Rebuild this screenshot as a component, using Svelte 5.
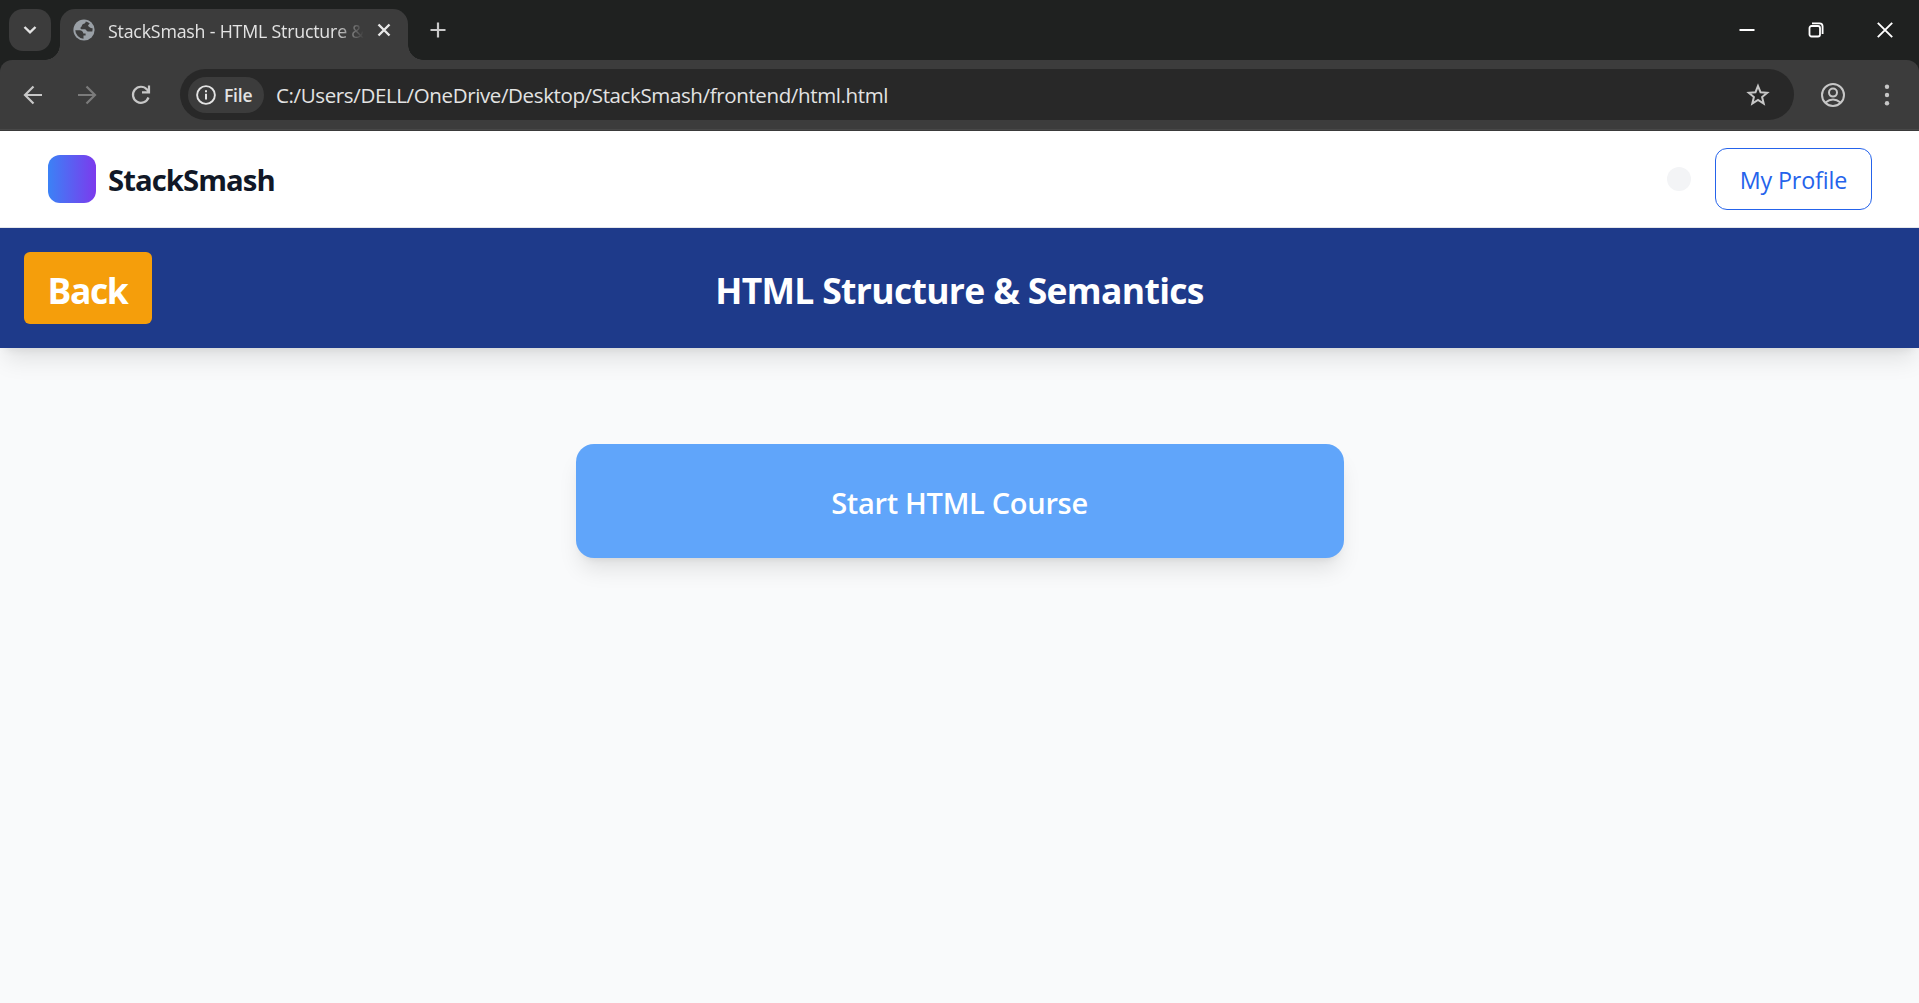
<script>
  const windowTitle = 'StackSmash - HTML Structure &';
  const address = 'C:/Users/DELL/OneDrive/Desktop/StackSmash/frontend/html.html';
</script>

<div class="window">
  <div class="tabstrip">
    <button class="tab-search" aria-label="Search tabs">
      <svg width="14" height="10" viewBox="0 0 14 10"><path d="M1.5 2 7 7.4 12.500 2" fill="none" stroke="#e3e3e3" stroke-width="2.4" /></svg>
    </button>
    <div class="tab">
      <svg class="globe" width="22" height="22" viewBox="0 0 22 22">
        <circle cx="11" cy="11" r="10.600" fill="#9aa0a6" />
        <path d="M12.800 2.500C12.500 4.600 11 4.600 9.800 5.200C8.800 5.700 9.200 7.300 8 8C7.200 8.600 7.300 10.300 8.600 10.300H11.800C13.200 10.300 13.300 12.500 14.800 12.500H19.300A8.800 8.800 0 0 0 19.600 9.300C18.500 9.600 17.600 8.900 16.600 8.300C15.200 7.500 14.500 6.700 15.800 5.600L16.800 4.400A8.800 8.800 0 0 0 12.800 2.500Z M2.300 11.200H6.500C8.800 11.200 10.300 12.600 10.300 14.600H12.600V16.400H10.500V19.700A8.800 8.800 0 0 1 2.300 11.200Z" fill="#3c3c3c" />
      </svg>
      <span class="tab-title">{windowTitle}</span>
      <svg class="tab-close" width="14" height="14" viewBox="0 0 14 14"><path d="M1.500 1.500 12.500 12.500M12.500 1.500 1.500 12.500" stroke="#e8e8e8" stroke-width="2.400" /></svg>
    </div>
    <svg class="new-tab" width="16" height="16" viewBox="0 0 16 16"><path d="M8 .5V15.500M.5 8H15.500" stroke="#c9c9c9" stroke-width="2.200" /></svg>
    <div class="controls">
      <svg width="16" height="16" viewBox="0 0 16 16"><path d="M.5 8H15.500" stroke="#fff" stroke-width="2" /></svg>
      <svg width="16" height="16" viewBox="0 0 16 16" fill="none" stroke="#fff" stroke-width="1.800"><rect x="1.500" y="4" width="10.500" height="10.500" rx="2" /><path d="M4 1.300H11.500Q14.600 1.300 14.600 4.500V12" /></svg>
      <svg width="16" height="16" viewBox="0 0 16 16"><path d="M.8 .8 15.200 15.200M15.200 .8 .8 15.200" stroke="#fff" stroke-width="1.900" /></svg>
    </div>
  </div>

  <div class="toolbar-frame">
    <div class="toolbar">
      <svg class="nav" width="20" height="20" viewBox="0 0 20 20"><path d="M19 10H2.500M10.500 1.500 2 10 10.500 18.500" fill="none" stroke="#c7c7c7" stroke-width="2.200" /></svg>
      <svg class="nav forward-arrow" width="20" height="20" viewBox="0 0 20 20"><path d="M1 10H17.500M9.500 1.500 18 10 9.500 18.500" fill="none" stroke="#7b7b7b" stroke-width="2.200" /></svg>
      <svg class="nav reload" width="20" height="20" viewBox="0 0 20 20"><path d="M17.500 12.500A8 8 0 1 1 16 4.500L18 6.700M18 .5V7.400H11" fill="none" stroke="#c7c7c7" stroke-width="2.200" /></svg>
      <div class="omnibox">
        <div class="chip">
          <svg width="20" height="20" viewBox="0 0 20 20"><circle cx="10" cy="10" r="8.900" fill="none" stroke="#e3e3e3" stroke-width="1.900" /><path d="M10 8.800V14.600M10 5.300V7.300" stroke="#e3e3e3" stroke-width="2" /></svg>
          <span class="chip-label">File</span>
        </div>
        <span class="address">{address}</span>
        <svg class="star" width="24" height="24" viewBox="0 0 24 24"><path d="M12 3 14.500 9.200 21.200 9.700 16.100 14 17.700 20.500 12 17 6.300 20.500 7.900 14 2.800 9.700 9.500 9.200Z" fill="none" stroke="#c7c7c7" stroke-width="2" /></svg>
      </div>
      <svg class="account" width="24" height="24" viewBox="0 0 24 24" fill="none" stroke="#c7c7c7" stroke-width="2"><circle cx="12" cy="12" r="11" /><circle cx="12" cy="9.600" r="4" /><path d="M4.500 19.500Q12 13.500 19.500 19.500" /></svg>
      <svg class="menu" width="6" height="24" viewBox="0 0 6 24" fill="#c7c7c7"><circle cx="3" cy="3.800" r="2.200" /><circle cx="3" cy="12" r="2.200" /><circle cx="3" cy="20.200" r="2.200" /></svg>
    </div>
  </div>

  <header class="site-header">
    <div class="brand"><span class="logo"></span><span class="brand-name">StackSmash</span></div>
    <div class="actions"><span class="dot"></span><button class="profile">My Profile</button></div>
  </header>

  <section class="banner">
    <button class="back">Back</button>
    <h1>HTML Structure &amp; Semantics</h1>
  </section>

  <main>
    <button class="start">Start HTML Course</button>
  </main>
</div>

<style>
  :global(body) { margin: 0; overflow: hidden; }
  .window { height: 1003px; width: 1919px; display: flex; flex-direction: column; background: #f9fafb; font-family: 'Open Sans', 'Noto Sans', sans-serif; overflow: hidden; }
  .window * { box-sizing: border-box; }
  button { border: 0; padding: 0; font-family: inherit; }
  svg { display: block; flex: none; }
  span { white-space: nowrap; }
  .tabstrip { height: 60px; flex: none; background: #1f2120; display: flex; padding: 9px 26px 0 9px; }
  .tab-search { width: 42px; height: 42px; border-radius: 14px; background: #3c3c3c; display: flex; align-items: center; justify-content: center; }
  .tab { width: 348px; height: 51px; margin-left: 9px; border-radius: 15px 15px 0 0; background: #3c3c3c; display: flex; padding: 10px 17px 0 13px; position: relative; }
  .tab::before, .tab::after { content: ''; position: absolute; bottom: 0; width: 15px; height: 15px; }
  .tab::before { left: -15px; background: radial-gradient(circle at 0 0, transparent 14.500px, #3c3c3c 15px); }
  .tab::after { right: -15px; background: radial-gradient(circle at 100% 0, transparent 14.500px, #3c3c3c 15px); }
  .tab-title { width: 256px; margin: 0 0 0 13px; font-size: 17.800px; letter-spacing: -.2px; line-height: 24px; color: #e3e3e3; mask-image: linear-gradient(90deg, #000 226px, transparent 256px); }
  .tab-close { margin: 4px 0 0 13px; }
  .new-tab { margin: 13px 0 0 22px; }
  .controls { margin: 12.500px 0 0 auto; display: flex; gap: 53px; }
  .toolbar-frame { height: 71px; flex: none; background: #1f2120; }
  .toolbar { height: 71px; display: flex; align-items: center; padding: 0 29px 1px 23px; border-radius: 12px 12px 0 0; background: #3c3c3c; border-bottom: 1px solid #3a3a3a; box-shadow: inset 0 -1px #484848; }
  .forward-arrow { margin-left: 34px; }
  .reload { margin-left: 34px; }
  .omnibox { width: 1614px; height: 51px; margin-left: 29px; padding: 0 24px 0 8px; border-radius: 26px; background: #282828; display: flex; align-items: center; }
  .chip { width: 76px; height: 36px; padding-left: 8px; border-radius: 18px; background: #3c3c3c; display: flex; align-items: center; }
  .chip-label { margin-left: 8px; font-size: 17.500px; letter-spacing: -.2px; font-weight: 600; line-height: 24px; color: #e3e3e3; }
  .address { margin-left: 12px; font-size: 20.500px; letter-spacing: -.37px; line-height: 28px; color: #e3e3e3; }
  .star { margin-left: auto; }
  .account { margin-left: 27px; }
  .menu { margin-left: auto; }
  .site-header { height: 97px; flex: none; display: flex; align-items: center; justify-content: space-between; padding: 0 47px 0 48px; background: #fff; border-bottom: 1px solid #e5e7eb; }
  .brand, .actions { display: flex; align-items: center; }
  .logo { width: 48px; height: 48px; border-radius: 12px; background: linear-gradient(90deg, #3b82f6, #7c3aed); }
  .brand-name { margin-left: 12px; padding-top: 1px; font-size: 29.300px; letter-spacing: -.95px; font-weight: 700; color: #111827; }
  .dot { width: 24px; height: 24px; border-radius: 50%; background: #f3f4f6; }
  .profile { width: 157px; height: 62px; margin-left: 24px; padding-top: 2px; border: 1px solid #2563eb; border-radius: 12px; background: #fff; color: #2563eb; font-size: 23.300px; letter-spacing: -.14px; }
  .banner { height: 120px; flex: none; display: grid; grid-template-columns: 128px 1fr 128px; align-items: center; padding: 0 24px; background: #1e3a8a; box-shadow: 0 15px 22.500px -4.500px rgb(0 0 0 / .1), 0 6px 9px -6px rgb(0 0 0 / .1); }
  .back { height: 72px; padding: 3px 1px 0 0; border-radius: 6px; background: #f59e0b; color: #fff; font-size: 35.500px; letter-spacing: -1.400px; font-weight: 700; }
  h1 { margin: 0; padding-top: 3px; text-align: center; color: #fff; font-size: 35.500px; letter-spacing: -.68px; font-weight: 700; }
  main { flex: 1; display: flex; justify-content: center; align-items: flex-start; padding-top: 96px; }
  .start { width: 768px; height: 114px; padding-top: 2px; border-radius: 18px; background: #60a5fa; color: #fff; font-size: 29px; letter-spacing: -.3px; font-weight: 600; box-shadow: 0 15px 22.500px -4.500px rgb(0 0 0 / .1), 0 6px 9px -6px rgb(0 0 0 / .1); }
</style>
